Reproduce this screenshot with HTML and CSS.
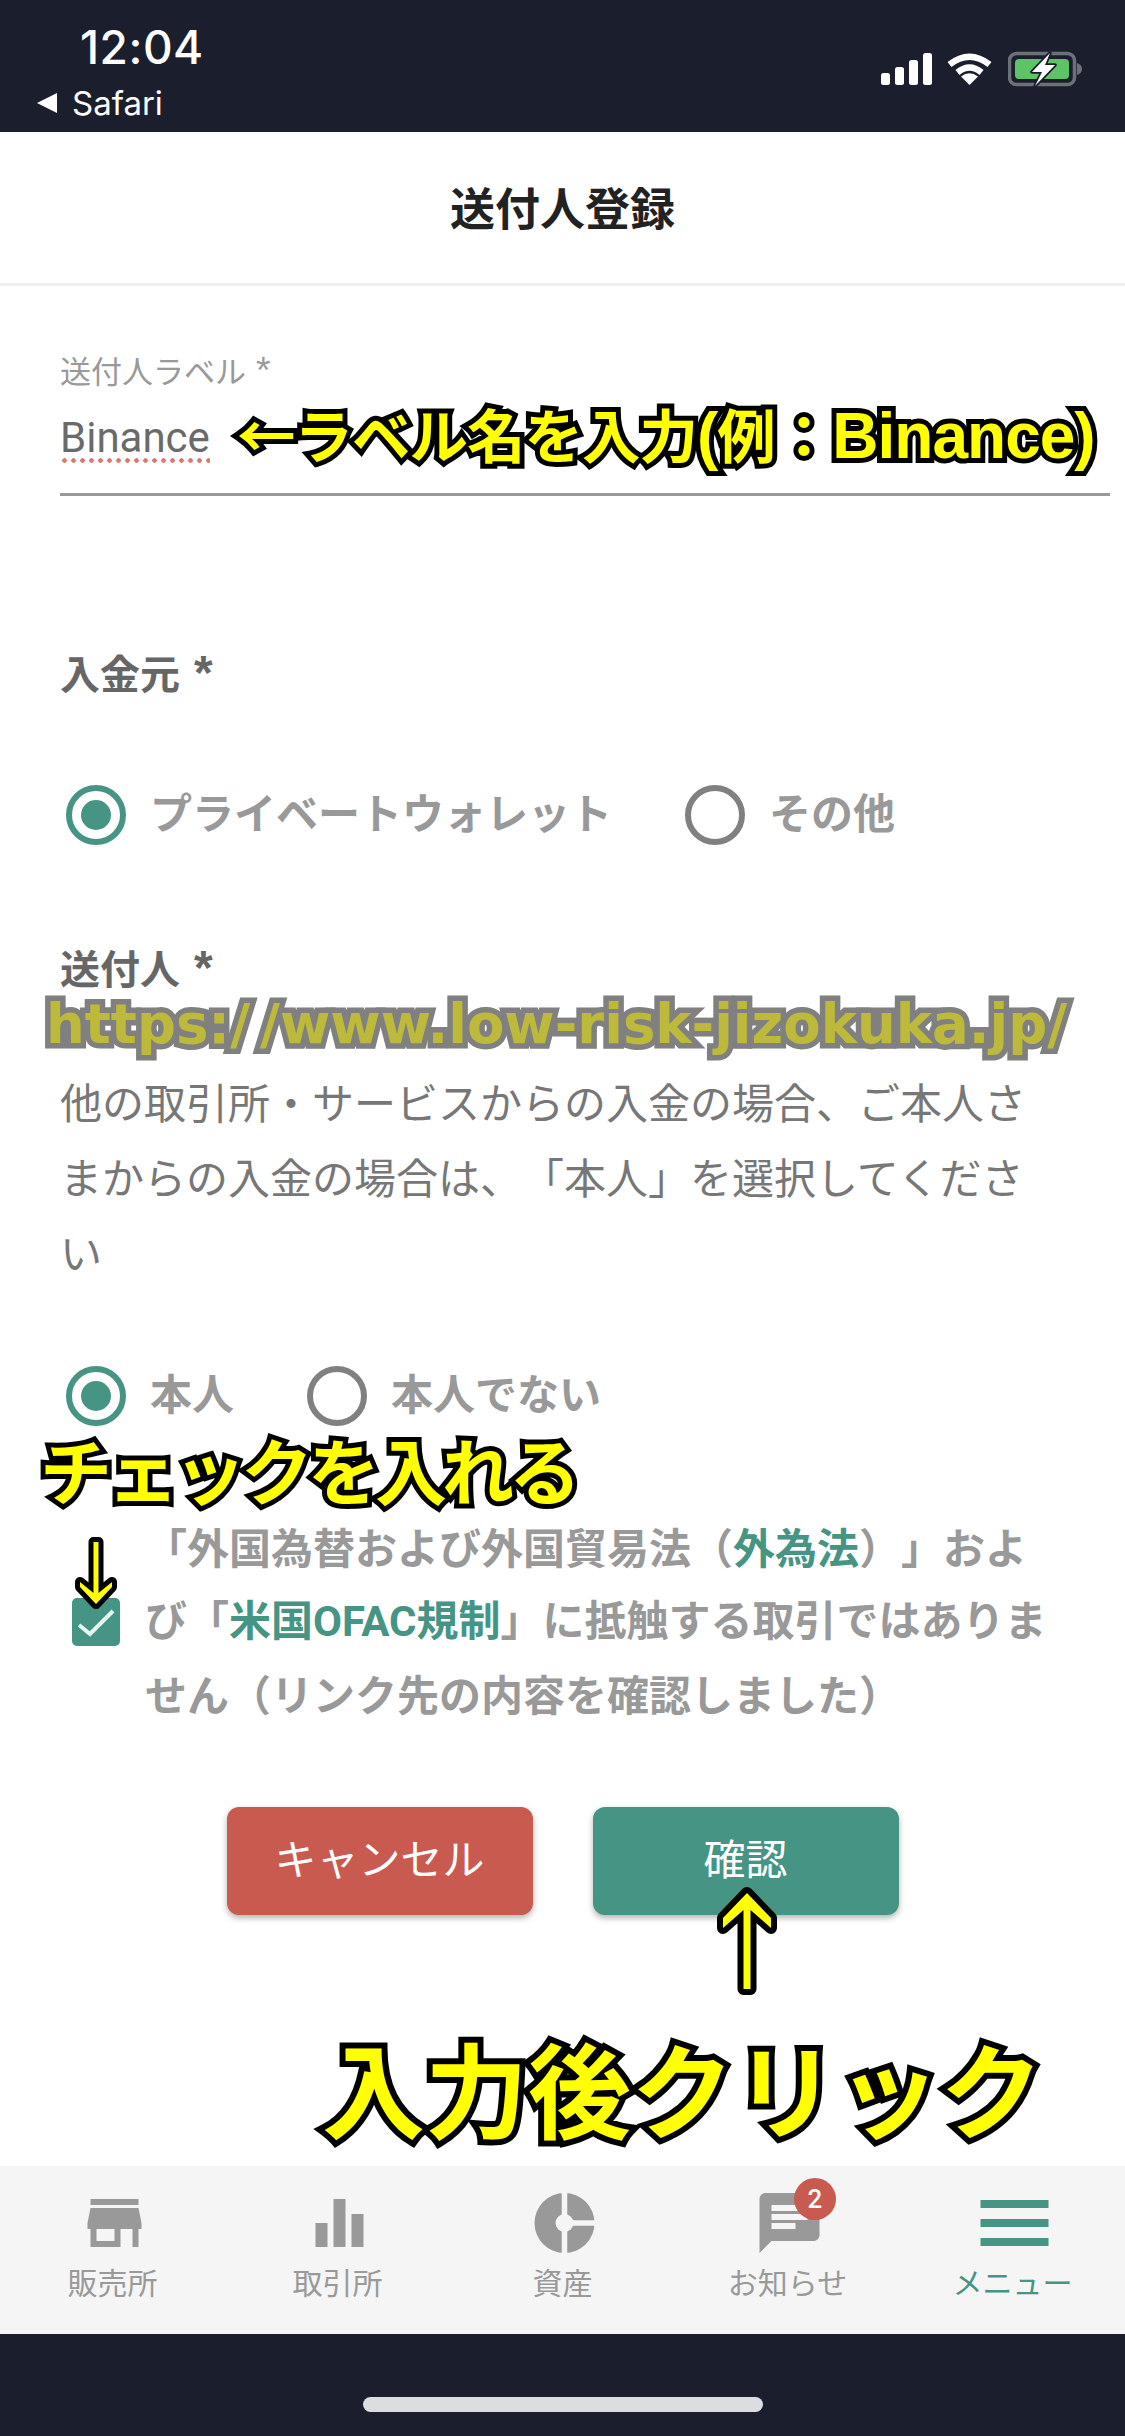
FILE: index.html
```html
<!DOCTYPE html>
<html lang="ja">
<head>
<meta charset="utf-8">
<title>送付人登録</title>
<link rel="stylesheet" href="styles.css">
</head>
<body>
<div class="phone">
  <div class="statusbar">
    <div class="status-left">
      <div class="time">12:04</div>
      <div class="back"><span class="back-tri"></span>Safari</div>
    </div>
    <div class="status-right">
      <svg class="ic-signal" viewBox="0 0 51 32"><rect x="0" y="20" width="9" height="12" rx="2.5"/><rect x="14" y="14" width="9" height="18" rx="2.5"/><rect x="28" y="7" width="9" height="25" rx="2.5"/><rect x="42" y="0" width="9" height="32" rx="2.5"/></svg>
      <svg class="ic-wifi" viewBox="0 0 45 33"><path d="M2.5 12.5Q22.5-3 42.5 12.5M10.5 20.5Q22.5 10.500 34.500 20.500" fill="none" stroke="#fff" stroke-width="6.500"/><path d="M22.500 33L14 24.500Q22.500 18 31 24.500Z" fill="#fff"/></svg>
      <svg class="ic-batt" viewBox="0 0 74 36"><rect x="1.500" y="2.500" width="65" height="31" rx="7" fill="none" stroke="#6d7078" stroke-width="3.500"/><rect x="7" y="8" width="54" height="20" rx="4" fill="#5cc366"/><path d="M69 12q5 1.500 5 6t-5 6z" fill="#6d7078"/><path d="M42 2L24 21h10l-7 14 20-21H37z" fill="#fff" stroke="#1b1f2d" stroke-width="3.500" paint-order="stroke" stroke-linejoin="round"/></svg>
    </div>
  </div>

  <header class="title-bar"><h1 class="title">送付人登録</h1></header>

  <main class="form">
    <div class="field-label">送付人ラベル <span class="ast small">*</span></div>
    <div class="input-line"><span class="input-value">Binance</span></div>

    <div class="section-label first">入金元 <span class="ast">*</span></div>
    <div class="radio-row first">
      <div class="radio-item gap-wide"><span class="radio on"></span><span class="radio-text">プライベートウォレット</span></div>
      <div class="radio-item"><span class="radio"></span><span class="radio-text">その他</span></div>
    </div>

    <div class="section-label second">送付人 <span class="ast">*</span></div>
    <p class="help">他の取引所・サービスからの入金の場合、ご本人さまからの入金の場合は、「本人」を選択してください</p>
    <div class="radio-row second">
      <div class="radio-item gap-narrow"><span class="radio on"></span><span class="radio-text">本人</span></div>
      <div class="radio-item"><span class="radio"></span><span class="radio-text">本人でない</span></div>
    </div>

    <div class="check-row">
      <span class="checkbox"><svg viewBox="0 0 48 48"><path d="M7 27l11 9L41 13" fill="none" stroke="#e9f7f3" stroke-width="4"/></svg></span>
      <p class="check-text">「外国為替および外国貿易法（<span class="link">外為法</span>）」および「<span class="link">米国<span class="abbr">OFAC</span>規制</span>」に抵触する取引ではありません（リンク先の内容を確認しました）</p>
    </div>

    <div class="buttons">
      <div class="btn cancel">キャンセル</div>
      <div class="btn ok">確認</div>
    </div>
  </main>

  <nav class="tabbar">
    <div class="tab">
      <svg class="tab-icon" viewBox="0 0 24 24"><path transform="translate(.5 0)" d="M20 4H4v2h16V4zm1 10v-2l-1-5H4l-1 5v2h1v6h10v-6h4v6h2v-6h1zm-9 4H6v-4h6v4z"/></svg>
      <span class="tab-label">販売所</span>
    </div>
    <div class="tab">
      <svg class="tab-icon" viewBox="0 0 72 72"><rect x="13.500" y="36" width="12" height="24"/><rect x="31.500" y="12" width="12" height="48"/><rect x="49.500" y="27" width="12" height="33"/></svg>
      <span class="tab-label">取引所</span>
    </div>
    <div class="tab">
      <svg class="tab-icon" viewBox="0 0 72 72"><circle cx="37.500" cy="36" r="30"/><path d="M37.500 4V68M37.500 36H70" stroke="#f5f5f5" fill="none" stroke-width="5.500"/><circle cx="37.500" cy="36" r="9" fill="#f5f5f5"/></svg>
      <span class="tab-label">資産</span>
    </div>
    <div class="tab">
      <svg class="tab-icon" viewBox="0 0 24 24"><path transform="translate(.5 0)" d="M20 2H4c-1.100 0-2 .9-2 2v18l4-4h14c1.100 0 2-.9 2-2V4c0-1.100-.9-2-2-2zM6 9h12v2H6V9zm8 5H6v-2h8v2zm4-6H6V6h12v2z"/></svg>
      <span class="badge">2</span>
      <span class="tab-label">お知らせ</span>
    </div>
    <div class="tab active">
      <svg class="tab-icon" viewBox="0 0 72 72"><rect x="3.500" y="13" width="68" height="8"/><rect x="3.500" y="32" width="68" height="8"/><rect x="3.500" y="51" width="68" height="8"/></svg>
      <span class="tab-label">メニュー</span>
    </div>
  </nav>

  <div class="homebar"><span class="home-pill"></span></div>

  <div class="note note-label">←ラベル名を入力<span class="latin">(</span>例：<span class="latin">Binance)</span></div>
  <div class="watermark">https:<span class="slash">/</span>/www.low-risk-jizokuka.jp/</div>
  <div class="note note-check">チェックを入れる</div>
  <div class="note note-click">入力後クリック</div>
  <svg class="arrow arrow-down" viewBox="70 1530 52 84"><path d="M93.500 1542h5v51L112 1582v5l-16 17-16-17v-5l13.500 11z"/></svg>
  <svg class="arrow arrow-up" viewBox="712 1882 70 118"><path d="M747 1893l24 25v10l-20.500-18v79h-7v-79L723 1928v-10z"/></svg>
</div>
</body>
</html>
```
FILE: styles.css
```css
* { box-sizing: border-box; }
html, body { margin: 0; padding: 0; }
body { background: #fff; font-family: "Noto Sans CJK JP", "Noto Sans", sans-serif; font-feature-settings: "chws" 0, "palt" 0; text-spacing-trim: space-all; }
.phone { position: relative; width: 1125px; height: 2436px; display: flex; flex-direction: column; overflow: hidden; background: #fff; }

.statusbar { height: 132px; background: #1b1f2d; color: #fff; display: flex; justify-content: space-between; flex-shrink: 0; }
.status-left { padding: 22px 0 0 37px; font-family: Inter, Roboto, sans-serif; }
.time { font-size: 46px; line-height: 50px; font-weight: 500; padding-left: 43px; letter-spacing: 0.5px; }
.back { display: flex; align-items: center; font-size: 33px; line-height: 40px; margin-top: 11px; }
.back-tri { width: 0; height: 0; border-style: solid; border-width: 10px 20px 10px 0; border-color: transparent #fff transparent transparent; margin-right: 15px; }
.status-right { display: flex; align-items: flex-start; padding: 51px 43px 0 0; }
.status-right svg { display: block; }
.ic-signal { width: 51px; height: 32px; fill: #fff; margin: 2px 15px 0 0; }
.ic-wifi { width: 45px; height: 33px; margin: 1px 16px 0 0; }
.ic-batt { width: 74px; height: 36px; }

.title-bar { height: 154px; border-bottom: 3px solid #eee; display: flex; align-items: center; justify-content: center; flex-shrink: 0; }
.title { margin: 0 0 1px; font-size: 45px; line-height: 60px; font-weight: 700; color: #222; }

.form { flex: 1; padding-top: 63px; }
.form > * { margin-left: 60px; }
.field-label { font-size: 31px; line-height: 42px; color: #999; }
.ast { font-family: "Liberation Sans", sans-serif; font-size: 1.2em; line-height: 0; margin-left: 5px; }
.ast.small { margin-left: 3px; }
.input-line { margin-right: 15px; height: 105px; border-bottom: 3px solid #999; line-height: 94px; font-family: Roboto, sans-serif; font-size: 42px; color: #6a6a6a; }
.input-value { display: inline-block; line-height: 50px; background: radial-gradient(circle at 50% 50%, #e0756b 2px, transparent 2.500px) left bottom / 9px 5px repeat-x; }

.section-label { font-size: 40px; line-height: 50px; font-weight: 700; color: #666; }
.section-label.first { margin-top: 151px; }
.section-label.second { margin-top: 97px; }

.radio-row { display: flex; height: 60px; margin-left: 66px !important; }
.radio-row.first { margin-top: 88px; }
.radio-row.second { margin-top: 78px; }
.radio-item { display: flex; align-items: center; }
.gap-wide { margin-right: 73px; }
.gap-narrow { margin-right: 73px; }
.radio { width: 60px; height: 60px; border-radius: 50%; border: 6px solid #808080; flex-shrink: 0; position: relative; }
.radio.on { border-color: #459484; }
.radio.on::after { content: ""; position: absolute; left: 9px; top: 9px; width: 30px; height: 30px; border-radius: 50%; background: #459484; }
.radio-text { font-size: 42px; line-height: 60px; font-weight: 700; color: #999; margin: 0 0 8px 24px; }

.help { margin: 71px 0 0 60px; width: 990px; font-size: 42px; line-height: 75px; color: #777; }

.check-row { display: flex; margin-top: 84px; margin-left: 72px !important; }
.checkbox { width: 48px; height: 48px; border-radius: 5px; background: #459484; flex-shrink: 0; margin: 88px 25px 0 0; display: block; }
.checkbox svg { display: block; width: 48px; height: 48px; }
.check-text { margin: 0; width: 918px; font-size: 42px; line-height: 71.500px; font-weight: 700; color: #999; }
.link { color: #459484; }
.abbr { font-family: Roboto, sans-serif; }

.buttons { display: flex; justify-content: center; gap: 60px; margin: 78px 0 0 !important; }
.btn { width: 306px; height: 108px; border-radius: 12px; color: #fff; font-size: 42px; line-height: 100px; text-align: center; box-shadow: 0 3px 6px rgba(0,0,0,.3); }
.cancel { background: #c95a50; }
.ok { background: #459484; }

.tabbar { height: 168px; background: #f5f5f5; display: grid; grid-template-columns: repeat(5, 1fr); flex-shrink: 0; }
.tab { position: relative; display: flex; flex-direction: column; align-items: center; padding-top: 21px; color: #999; }
.tab-icon { width: 72px; height: 72px; display: block; fill: #999; }
.tab-label { margin-top: 2px; font-size: 30px; line-height: 40px; }
.tab.active { color: #459484; }
.tab.active .tab-icon { fill: #459484; }
.badge { position: absolute; left: 119px; top: 12px; width: 42px; height: 42px; border-radius: 50%; background: #c95a50; color: #fff; font-family: Roboto, sans-serif; font-size: 26px; line-height: 42px; text-align: center; font-weight: 500; }

.homebar { height: 102px; background: #1b1f2d; flex-shrink: 0; padding-top: 63px; display: flex; justify-content: center; align-items: flex-start; }
.home-pill { width: 400px; height: 15px; border-radius: 8px; background: #dcdde0; }

.note { position: absolute; font-weight: 700; color: #ff0; -webkit-text-stroke: 10px #000; paint-order: stroke fill; white-space: nowrap; }
.note-label { left: 237px; top: 396px; font-size: 58.500px; line-height: 74px; letter-spacing: -1px; }
.latin { font-family: "Liberation Sans", sans-serif; font-size: 64px; }
.note-check { left: 40px; top: 1418px; font-size: 72px; line-height: 100px; letter-spacing: -5px; }
.note-click { left: 322px; top: 2017px; font-size: 103px; line-height: 140px; -webkit-text-stroke-width: 12px; }
.watermark { position: absolute; left: 46px; top: 990px; font-family: "DejaVu Sans", sans-serif; font-weight: 700; font-size: 54.500px; line-height: 68px; color: #bdb93a; -webkit-text-stroke: 11px #808080; paint-order: stroke fill; white-space: nowrap; }
.slash { letter-spacing: 10px; }
.arrow { position: absolute; fill: #ff0; stroke: #000; stroke-linejoin: round; paint-order: stroke; overflow: visible; }
.arrow-down { left: 70px; top: 1530px; width: 52px; height: 84px; stroke-width: 10; }
.arrow-up { left: 712px; top: 1882px; width: 70px; height: 118px; stroke-width: 12; }
```
